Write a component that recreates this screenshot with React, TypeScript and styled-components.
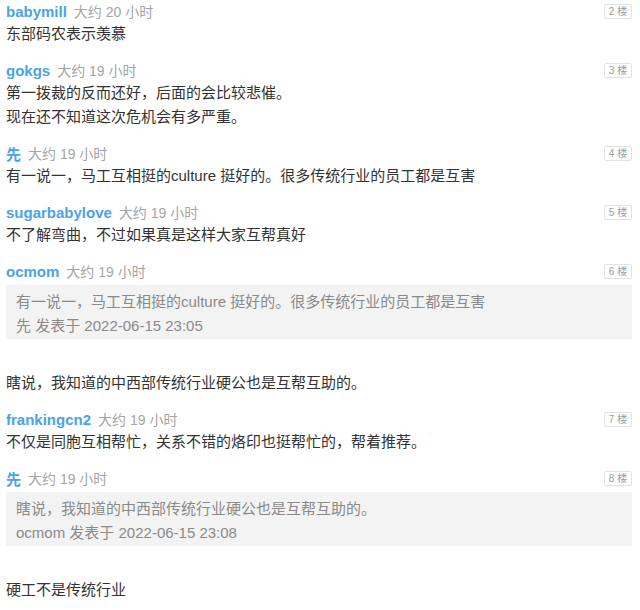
import React from 'react';
import styled, { createGlobalStyle } from 'styled-components';

const GlobalStyle = createGlobalStyle`
  body {
    margin: 0;
    background: #ffffff;
    font-family: "Liberation Sans", "Noto Sans CJK SC", sans-serif;
    color: #333333;
  }
`;

const List = styled.div`
  padding: 0 8px 0 6px;
`;

const Comment = styled.div`
  padding-bottom: 13px;
`;

const Header = styled.div`
  display: flex;
  align-items: center;
  height: 22px;
`;

const User = styled.span`
  font-size: 15px;
  font-weight: bold;
  color: #4aa3e8;
`;

const Time = styled.span`
  margin-left: 7px;
  font-size: 14px;
  color: #a5a5a5;
`;

const Floor = styled.span`
  margin-left: auto;
  box-sizing: border-box;
  width: 28px;
  height: 15px;
  border: 1px solid #e2e2e2;
  border-radius: 2px;
  font-size: 10px;
  line-height: 13px;
  color: #9c9c9c;
  text-align: center;
`;

const Body = styled.div`
  font-size: 15px;
  line-height: 24px;
  color: #333333;
`;

const Quote = styled.div`
  margin: 3px 0 32px;
  padding: 5px 10px 1px;
  background: #f3f3f3;
  font-size: 15px;
  line-height: 24px;
  color: #8a8a8a;
`;

type Item = {
  user: string;
  time: string;
  floor: number;
  lines: string[];
  quote?: { text: string; by: string; at: string };
};

const comments: Item[] = [
  { user: 'babymill', time: '大约 20 小时', floor: 2, lines: ['东部码农表示羡慕'] },
  {
    user: 'gokgs',
    time: '大约 19 小时',
    floor: 3,
    lines: ['第一拨裁的反而还好，后面的会比较悲催。', '现在还不知道这次危机会有多严重。'],
  },
  {
    user: '先',
    time: '大约 19 小时',
    floor: 4,
    lines: ['有一说一，马工互相挺的culture 挺好的。很多传统行业的员工都是互害'],
  },
  {
    user: 'sugarbabylove',
    time: '大约 19 小时',
    floor: 5,
    lines: ['不了解弯曲，不过如果真是这样大家互帮真好'],
  },
  {
    user: 'ocmom',
    time: '大约 19 小时',
    floor: 6,
    quote: {
      text: '有一说一，马工互相挺的culture 挺好的。很多传统行业的员工都是互害',
      by: '先',
      at: '2022-06-15 23:05',
    },
    lines: ['瞎说，我知道的中西部传统行业硬公也是互帮互助的。'],
  },
  {
    user: 'frankingcn2',
    time: '大约 19 小时',
    floor: 7,
    lines: ['不仅是同胞互相帮忙，关系不错的烙印也挺帮忙的，帮着推荐。'],
  },
  {
    user: '先',
    time: '大约 19 小时',
    floor: 8,
    quote: {
      text: '瞎说，我知道的中西部传统行业硬公也是互帮互助的。',
      by: 'ocmom',
      at: '2022-06-15 23:08',
    },
    lines: ['硬工不是传统行业'],
  },
];

const App: React.FC = () => {
  return (
    <>
      <GlobalStyle />
      <List>
        {comments.map((c) => (
          <Comment key={c.floor}>
            <Header>
              <User>{c.user}</User>
              <Time>{c.time}</Time>
              <Floor>{c.floor} 楼</Floor>
            </Header>
            {c.quote && (
              <Quote>
                <div>{c.quote.text}</div>
                <div>
                  {c.quote.by} 发表于 {c.quote.at}
                </div>
              </Quote>
            )}
            {c.lines.map((line, i) => (
              <Body key={i}>{line}</Body>
            ))}
          </Comment>
        ))}
      </List>
    </>
  );
};

export default App;
